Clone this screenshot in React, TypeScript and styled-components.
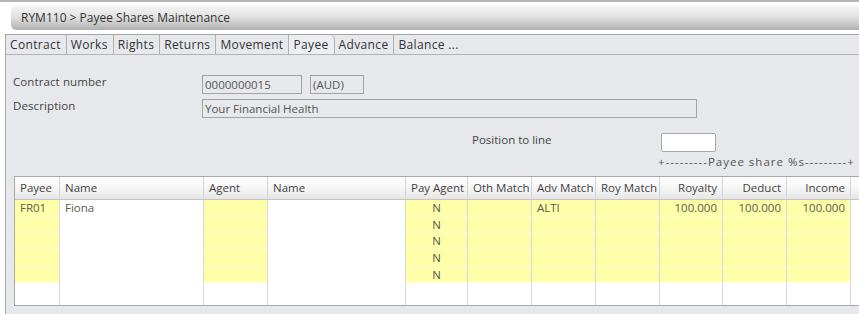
import React from 'react';
import styled, { createGlobalStyle } from 'styled-components';

const GlobalStyle = createGlobalStyle`
    html, body {
        margin: 0;
        padding: 0;
        background: #ffffff;
        font-family: "Open Sans", "Noto Sans", sans-serif;
        font-size: 11px;
        color: #444;
        overflow: hidden;
    }
`;

const tabs = ['Contract', 'Works', 'Rights', 'Returns', 'Movement', 'Payee', 'Advance', 'Balance ...'];

type Col = { title: string; width: number; yellow: boolean; align: 'left' | 'center' | 'right' };

const columns: Col[] = [
    { title: 'Payee', width: 45, yellow: true, align: 'left' },
    { title: 'Name', width: 144, yellow: false, align: 'left' },
    { title: 'Agent', width: 64, yellow: true, align: 'left' },
    { title: 'Name', width: 138, yellow: false, align: 'left' },
    { title: 'Pay Agent', width: 62, yellow: true, align: 'center' },
    { title: 'Oth Match', width: 64, yellow: true, align: 'left' },
    { title: 'Adv Match', width: 64, yellow: true, align: 'left' },
    { title: 'Roy Match', width: 64, yellow: true, align: 'left' },
    { title: 'Royalty', width: 63, yellow: true, align: 'right' },
    { title: 'Deduct', width: 64, yellow: true, align: 'right' },
    { title: 'Income', width: 64, yellow: true, align: 'right' },
    { title: '', width: 40, yellow: false, align: 'left' },
];

const rows: string[][] = [
    ['FR01', 'Fiona', '', '', 'N', '', 'ALTI', '', '100.000', '100.000', '100.000', ''],
    ['', '', '', '', 'N', '', '', '', '', '', '', ''],
    ['', '', '', '', 'N', '', '', '', '', '', '', ''],
    ['', '', '', '', 'N', '', '', '', '', '', '', ''],
    ['', '', '', '', 'N', '', '', '', '', '', '', ''],
];

// row heights alternate so five rows land on the 16.7px pitch of the original
const rowHeights = [17, 16, 17, 17, 16];

const App = () => {
    return (
        <>
            <GlobalStyle />
            <PageWrapper>
                <TitleBar>RYM110 &gt; Payee Shares Maintenance</TitleBar>
                <Panel>
                    <TabStrip>
                        {tabs.map((t) => (
                            <Tab key={t} active={t === 'Payee'}>{t}</Tab>
                        ))}
                    </TabStrip>
                    <FormArea>
                        <FormRow>
                            <Label>Contract number</Label>
                            <ReadBox width={100}>0000000015</ReadBox>
                            <ReadBox width={54}>(AUD)</ReadBox>
                        </FormRow>
                        <FormRow>
                            <Label>Description</Label>
                            <ReadBox width={495}>Your Financial Health</ReadBox>
                        </FormRow>
                        <PositionRow>
                            <PositionLabel>Position to line</PositionLabel>
                            <PositionInput />
                        </PositionRow>
                        <ShareCaption>+---------Payee share %s---------+</ShareCaption>
                    </FormArea>
                    <Grid>
                        <HeaderRow>
                            {columns.map((c, i) => (
                                <HeadCell key={i} w={c.width} align={c.align === 'center' ? 'left' : c.align}>
                                    {c.title}
                                </HeadCell>
                            ))}
                        </HeaderRow>
                        {rows.map((r, ri) => (
                            <BodyRow key={ri} h={rowHeights[ri]}>
                                {columns.map((c, ci) => (
                                    <Cell key={ci} w={c.width} yellow={c.yellow} align={c.align}>
                                        {r[ci]}
                                    </Cell>
                                ))}
                            </BodyRow>
                        ))}
                        <FillerRow>
                            {columns.map((c, ci) => (
                                <FillerCell key={ci} w={c.width} />
                            ))}
                        </FillerRow>
                    </Grid>
                </Panel>
            </PageWrapper>
        </>
    );
};

export default App;

const PageWrapper = styled.div`
    border-top: 2px solid #b4b4b4;
    height: 312px;
    width: 859px;
    overflow: hidden;
    background: #ffffff;
`;

const TitleBar = styled.div`
    margin: 3px 0 0 11px;
    height: 24px;
    line-height: 24px;
    padding-left: 10px;
    border-radius: 5px 0 0 5px;
    background: linear-gradient(#f4f4f4 0%, #e2e2e2 45%, #b0b0b0 100%);
    border-top: 1px solid #fafafa;
    font-size: 12px;
    color: #333;
`;

const Panel = styled.div`
    margin: 4px 0 0 5px;
    border-left: 1px solid #a8a8a8;
    background: #e6e8ec;
    height: 300px;
`;

const TabStrip = styled.div`
    display: flex;
    height: 19px;
    border-top: 1px solid #a4a4a4;
    border-bottom: 1px solid #b4b4b4;
`;

const Tab = styled.div<{ active?: boolean }>`
    padding: 0 5px 0 4px;
    line-height: 19px;
    font-size: 12px;
    letter-spacing: 0.35px;
    color: #333;
    border-right: 1px solid #b0b0b0;
    border-top-right-radius: ${(p) => (p.active ? '5px' : '0')};
    background: ${(p) => (p.active ? '#eceef1' : '#e6e8ec')};
    &:last-child {
        border-right: none;
    }
`;

const FormArea = styled.div`
    box-sizing: border-box;
    padding: 17px 0 0 7px;
    height: 121px;
`;

const FormRow = styled.div`
    display: flex;
    align-items: center;
    gap: 8px;
    height: 24px;
`;

const Label = styled.div`
    width: 181px;
    font-size: 11.5px;
    letter-spacing: 0.1px;
    color: #444;
    margin-top: -6px;
`;

const ReadBox = styled.div<{ width: number }>`
    box-sizing: border-box;
    width: ${(p) => p.width}px;
    height: 19px;
    line-height: 17px;
    padding-left: 2px;
    border: 1px solid #a4a4a4;
    font-size: 11.5px;
    color: #555;
`;

const PositionRow = styled.div`
    display: flex;
    align-items: center;
    margin: 12px 0 0 459px;
    height: 20px;
`;

const PositionLabel = styled.div`
    width: 189px;
    font-size: 11.5px;
    color: #444;
    margin-top: -5px;
`;

const PositionInput = styled.div`
    box-sizing: border-box;
    width: 55px;
    height: 19px;
    background: #ffffff;
    border: 1px solid #a8a8a8;
    border-radius: 2px;
`;

const ShareCaption = styled.div`
    margin: 2px 0 0 645px;
    font-size: 11.5px;
    letter-spacing: 1px;
    color: #555;
    white-space: nowrap;
`;

const Grid = styled.div`
    margin-left: 8px;
    border-top: 1px solid #a8a8a8;
    border-bottom: 1px solid #a8a8a8;
    border-left: 1px solid #a8a8a8;
    width: 900px;
    background: #ffffff;
`;

const HeaderRow = styled.div`
    display: flex;
    height: 22px;
    background: linear-gradient(#ffffff 0%, #f3f3f3 60%, #e6e6e6 100%);
    border-bottom: 1px solid #c4c4c4;
`;

const HeadCell = styled.div<{ w: number; align: string }>`
    box-sizing: border-box;
    width: ${(p) => p.w}px;
    flex: none;
    padding: 0 5px;
    line-height: 22px;
    font-size: 11.5px;
    color: #444;
    text-align: ${(p) => p.align};
    border-right: 1px solid #d4d4d4;
    white-space: nowrap;
    overflow: hidden;
`;

const BodyRow = styled.div<{ h: number }>`
    display: flex;
    height: ${(p) => p.h}px;
`;

const Cell = styled.div<{ w: number; yellow: boolean; align: string }>`
    box-sizing: border-box;
    width: ${(p) => p.w}px;
    flex: none;
    padding: 0 5px;
    line-height: 15px;
    font-size: 11.5px;
    color: #5a5a4a;
    text-align: ${(p) => p.align};
    background: ${(p) => (p.yellow ? '#ffffaa' : '#ffffff')};
    border-bottom: 1px solid ${(p) => (p.yellow ? '#ffffd4' : '#ffffff')};
    border-right: 1px solid #d8d8d8;
    white-space: nowrap;
    overflow: hidden;
`;

const FillerRow = styled.div`
    display: flex;
    height: 22px;
`;

const FillerCell = styled.div<{ w: number }>`
    box-sizing: border-box;
    width: ${(p) => p.w}px;
    flex: none;
    border-right: 1px solid #d8d8d8;
`;
